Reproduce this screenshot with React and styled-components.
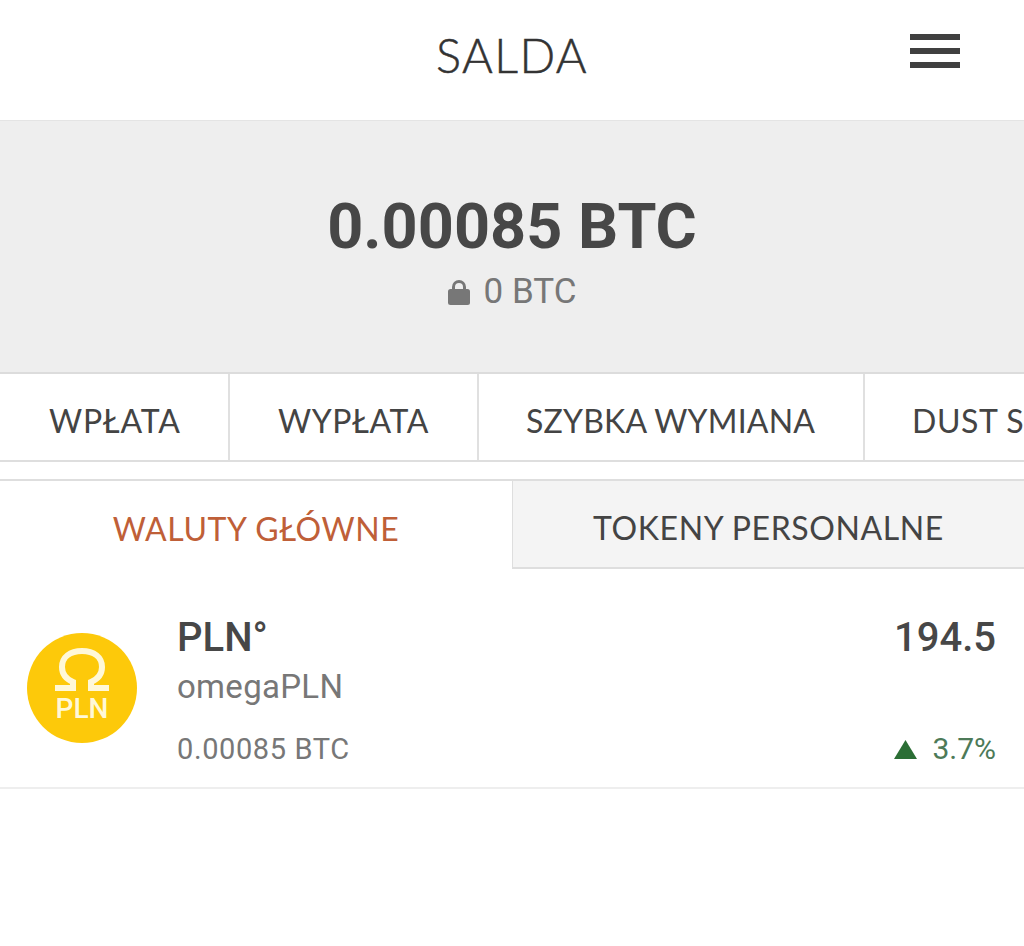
import React from 'react';
import styled, { createGlobalStyle } from 'styled-components';

const GlobalStyle = createGlobalStyle`
  html, body {
    margin: 0;
    padding: 0;
    background: #fff;
  }
  body {
    font-family: Roboto, "Liberation Sans", sans-serif;
    color: #444;
    overflow: hidden;
  }
`;

const Page = styled.div`
  width: 1024px;
  height: 946px;
  overflow: hidden;
  background: #fff;
`;

const Header = styled.header`
  height: 120px;
  display: grid;
  grid-template-columns: 1fr auto 1fr;
  align-items: center;
`;

const Title = styled.h1`
  grid-column: 2;
  margin: 0 0 10px;
  font-family: Lato, sans-serif;
  font-weight: 300;
  font-size: 47px;
  line-height: 56px;
  color: #333;
  letter-spacing: 1.4px;
  -webkit-text-stroke: 0.5px #333;
`;

const MenuButton = styled.button`
  grid-column: 3;
  justify-self: end;
  width: 50px;
  height: 34px;
  margin: 0 64px 19px 0;
  padding: 0;
  border: 0;
  background: none;
  display: flex;
  flex-direction: column;
  justify-content: space-between;
`;

const MenuBar = styled.span`
  display: block;
  height: 6px;
  background: #404040;
`;

const Balance = styled.section`
  height: 254px;
  box-sizing: border-box;
  background: #eee;
  border-top: 1px solid #e4e4e4;
  border-bottom: 2px solid #dcdcdc;
  display: flex;
  flex-direction: column;
  align-items: center;
  padding-top: 71px;
`;

const Amount = styled.div`
  font-size: 63px;
  line-height: 70px;
  font-weight: 700;
  color: #474747;
`;

const Locked = styled.div`
  display: flex;
  align-items: center;
  gap: 14px;
  margin-top: 10px;
  font-size: 35px;
  line-height: 40px;
  color: #777;
`;

const Actions = styled.nav`
  display: flex;
  height: 88px;
  box-sizing: border-box;
  border-bottom: 2px solid #dedede;
  overflow: hidden;
`;

const Action = styled.div`
  flex: none;
  width: ${p => p.$width}px;
  box-sizing: border-box;
  border-right: 2px solid #e0e0e0;
  display: flex;
  align-items: center;
  padding: 6px 0 0 ${p => p.$pad}px;
  font-family: Lato, sans-serif;
  font-size: 32px;
  color: #444;
  white-space: nowrap;
  letter-spacing: ${p => p.$tracking}px;

  &:last-child {
    border-right: 0;
  }
`;

const Tabs = styled.div`
  display: grid;
  grid-template-columns: 512px 1fr;
  height: 90px;
  margin-top: 17px;
  border-top: 2px solid #dedede;
  box-sizing: border-box;
`;

const Tab = styled.div`
  display: flex;
  align-items: center;
  justify-content: center;
  padding-top: 6px;
  font-family: Lato, sans-serif;
  font-size: 32px;
  letter-spacing: 0.6px;
  color: ${p => (p.$active ? '#bf5f38' : '#444')};
  background: ${p => (p.$active ? '#fff' : '#f4f4f4')};
  ${p => !p.$active && 'border-left: 1px solid #dedede; border-bottom: 2px solid #dedede;'}
`;

const CoinRow = styled.div`
  height: 220px;
  box-sizing: border-box;
  border-bottom: 2px solid #eee;
  display: flex;
  padding: 47px 28px 0 27px;
`;

const CoinBadge = styled.div`
  flex: none;
  width: 110px;
  height: 110px;
  margin-top: 17px;
  border-radius: 50%;
  background: #fdc90a;
  display: flex;
  flex-direction: column;
  align-items: center;
  color: #fff8d8;
`;

const BadgeLabel = styled.span`
  font-size: 28px;
  line-height: 28px;
  font-weight: 500;
  margin-top: 4px;
`;

const CoinInfo = styled.div`
  margin-left: 40px;
  flex: 1;
  display: flex;
  flex-direction: column;
`;

const Ticker = styled.div`
  font-size: 40px;
  line-height: 44px;
  font-weight: 500;
  color: #474747;
`;

const CoinName = styled.div`
  font-size: 33px;
  line-height: 40px;
  margin-top: 7px;
  color: #777;
  letter-spacing: 0.3px;
`;

const CoinValue = styled.div`
  font-size: 29px;
  line-height: 36px;
  margin-top: 24px;
  color: #777;
  letter-spacing: 0.6px;
`;

const CoinNumbers = styled.div`
  display: flex;
  flex-direction: column;
  align-items: flex-end;
`;

const Quantity = styled.div`
  font-size: 40px;
  line-height: 44px;
  font-weight: 500;
  color: #474747;
`;

const Change = styled.div`
  display: flex;
  align-items: center;
  gap: 15px;
  margin-top: 71px;
  font-size: 30px;
  line-height: 36px;
  color: #4d7a58;
`;

const OmegaSvg = styled.svg`
  margin-top: 15px;
`;

function LockIcon() {
  return (
    <svg width="22" height="26" viewBox="0 0 22 26" fill="#777">
      <path d="M4 12V8a7 7 0 0 1 14 0v4h-3V8a4 4 0 0 0-8 0v4z" />
      <rect y="10" width="22" height="16" rx="2.5" />
    </svg>
  );
}

function OmegaIcon() {
  return (
    <OmegaSvg width="56" height="43" viewBox="0 0 56 43" fill="none" stroke="#fff8d8" strokeWidth="6">
      <path d="M1 40h18v-6c-7-3-11-8-11-15C8 9 16 3 28 3s20 6 20 16c0 7-4 12-11 15v6h18" />
    </OmegaSvg>
  );
}

function UpTriangle() {
  return (
    <svg width="23" height="19" viewBox="0 0 23 19" fill="#2b6e35">
      <path d="M11.5 0L23 19H0z" />
    </svg>
  );
}

export default function App() {
  return (
    <Page>
      <GlobalStyle />
      <Header>
        <Title>SALDA</Title>
        <MenuButton aria-label="menu">
          <MenuBar />
          <MenuBar />
          <MenuBar />
        </MenuButton>
      </Header>
      <Balance>
        <Amount>0.00085 BTC</Amount>
        <Locked>
          <LockIcon />
          <span>0 BTC</span>
        </Locked>
      </Balance>
      <Actions>
        <Action $width={230} $pad={49} $tracking={0.8}>WPŁATA</Action>
        <Action $width={249} $pad={48} $tracking={0.6}>WYPŁATA</Action>
        <Action $width={386} $pad={47} $tracking={0.2}>SZYBKA WYMIANA</Action>
        <Action $width={300} $pad={47} $tracking={0.6}>DUST SWAP</Action>
      </Actions>
      <Tabs>
        <Tab $active>WALUTY GŁÓWNE</Tab>
        <Tab>TOKENY PERSONALNE</Tab>
      </Tabs>
      <CoinRow>
        <CoinBadge>
          <OmegaIcon />
          <BadgeLabel>PLN</BadgeLabel>
        </CoinBadge>
        <CoinInfo>
          <Ticker>PLN°</Ticker>
          <CoinName>omegaPLN</CoinName>
          <CoinValue>0.00085 BTC</CoinValue>
        </CoinInfo>
        <CoinNumbers>
          <Quantity>194.5</Quantity>
          <Change>
            <UpTriangle />
            <span>3.7%</span>
          </Change>
        </CoinNumbers>
      </CoinRow>
    </Page>
  );
}
